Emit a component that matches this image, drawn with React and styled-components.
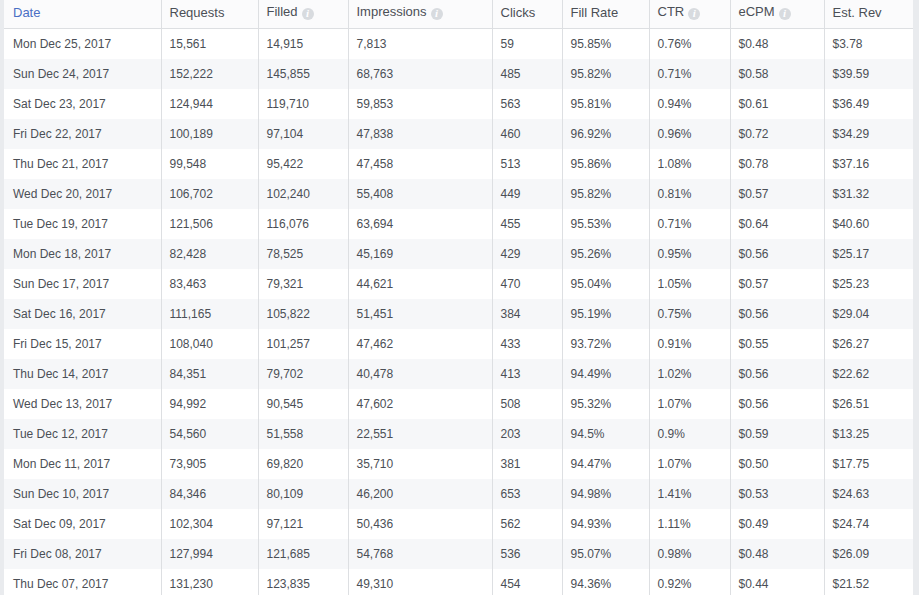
import React from 'react';
import styled, { createGlobalStyle } from 'styled-components';

const GlobalStyle = createGlobalStyle`
  html, body {
    margin: 0;
    padding: 0;
    background: #e9ebee;
    font-family: "Liberation Sans", Arial, sans-serif;
  }
`;

const Page = styled.div`
  padding: 0 6px 0 4px;
  background: #e9ebee;
  height: 595px;
  overflow: hidden;
`;

const Table = styled.table`
  width: 909px;
  border-collapse: collapse;
  table-layout: fixed;
  background: #fff;
  font-size: 12px;
  color: #4b4f56;
`;

const HeadCell = styled.th`
  height: 24px;
  padding: 0 8px 4px;
  text-align: left;
  font-weight: normal;
  font-size: 13px;
  color: ${(p) => (p.$active ? '#4a6fc4' : '#4b4f56')};
  background: #fbfbfc;
  border-left: 1px solid #dddfe2;
  border-bottom: 1px solid #dddfe2;
  white-space: nowrap;
  vertical-align: middle;

  &:first-child {
    border-left: none;
    padding-left: 9px;
  }
`;

const Row = styled.tr`
  background: ${(p) => (p.$striped ? '#f6f7f9' : '#fff')};
`;

const Cell = styled.td`
  height: 30px;
  padding: 0 8px;
  border-left: 1px solid #dddfe2;
  white-space: nowrap;
  vertical-align: middle;

  &:first-child {
    border-left: none;
    padding-left: 9px;
  }
`;

const Info = styled.span`
  display: inline-flex;
  align-items: center;
  justify-content: center;
  width: 12px;
  height: 12px;
  margin-left: 4px;
  border-radius: 50%;
  background: #d8dbdf;
  color: #fff;
  font-family: "Liberation Serif", "Times New Roman", serif;
  font-style: italic;
  font-weight: bold;
  font-size: 11px;
  line-height: 1;
  vertical-align: -1px;
`;

const columns = [
  { label: 'Date', width: 157, active: true },
  { label: 'Requests', width: 97 },
  { label: 'Filled', width: 90, info: true },
  { label: 'Impressions', width: 144, info: true },
  { label: 'Clicks', width: 70 },
  { label: 'Fill Rate', width: 87 },
  { label: 'CTR', width: 81, info: true },
  { label: 'eCPM', width: 94, info: true },
  { label: 'Est. Rev', width: 89 },
];

const rows = [
  ['Mon Dec 25, 2017', '15,561', '14,915', '7,813', '59', '95.85%', '0.76%', '$0.48', '$3.78'],
  ['Sun Dec 24, 2017', '152,222', '145,855', '68,763', '485', '95.82%', '0.71%', '$0.58', '$39.59'],
  ['Sat Dec 23, 2017', '124,944', '119,710', '59,853', '563', '95.81%', '0.94%', '$0.61', '$36.49'],
  ['Fri Dec 22, 2017', '100,189', '97,104', '47,838', '460', '96.92%', '0.96%', '$0.72', '$34.29'],
  ['Thu Dec 21, 2017', '99,548', '95,422', '47,458', '513', '95.86%', '1.08%', '$0.78', '$37.16'],
  ['Wed Dec 20, 2017', '106,702', '102,240', '55,408', '449', '95.82%', '0.81%', '$0.57', '$31.32'],
  ['Tue Dec 19, 2017', '121,506', '116,076', '63,694', '455', '95.53%', '0.71%', '$0.64', '$40.60'],
  ['Mon Dec 18, 2017', '82,428', '78,525', '45,169', '429', '95.26%', '0.95%', '$0.56', '$25.17'],
  ['Sun Dec 17, 2017', '83,463', '79,321', '44,621', '470', '95.04%', '1.05%', '$0.57', '$25.23'],
  ['Sat Dec 16, 2017', '111,165', '105,822', '51,451', '384', '95.19%', '0.75%', '$0.56', '$29.04'],
  ['Fri Dec 15, 2017', '108,040', '101,257', '47,462', '433', '93.72%', '0.91%', '$0.55', '$26.27'],
  ['Thu Dec 14, 2017', '84,351', '79,702', '40,478', '413', '94.49%', '1.02%', '$0.56', '$22.62'],
  ['Wed Dec 13, 2017', '94,992', '90,545', '47,602', '508', '95.32%', '1.07%', '$0.56', '$26.51'],
  ['Tue Dec 12, 2017', '54,560', '51,558', '22,551', '203', '94.5%', '0.9%', '$0.59', '$13.25'],
  ['Mon Dec 11, 2017', '73,905', '69,820', '35,710', '381', '94.47%', '1.07%', '$0.50', '$17.75'],
  ['Sun Dec 10, 2017', '84,346', '80,109', '46,200', '653', '94.98%', '1.41%', '$0.53', '$24.63'],
  ['Sat Dec 09, 2017', '102,304', '97,121', '50,436', '562', '94.93%', '1.11%', '$0.49', '$24.74'],
  ['Fri Dec 08, 2017', '127,994', '121,685', '54,768', '536', '95.07%', '0.98%', '$0.48', '$26.09'],
  ['Thu Dec 07, 2017', '131,230', '123,835', '49,310', '454', '94.36%', '0.92%', '$0.44', '$21.52'],
];

export default function App() {
  return (
    <Page>
      <GlobalStyle />
      <Table>
        <colgroup>
          {columns.map((c) => (
            <col key={c.label} style={{ width: c.width }} />
          ))}
        </colgroup>
        <thead>
          <tr>
            {columns.map((c) => (
              <HeadCell key={c.label} $active={c.active}>
                {c.label}
                {c.info && <Info>i</Info>}
              </HeadCell>
            ))}
          </tr>
        </thead>
        <tbody>
          {rows.map((r, i) => (
            <Row key={r[0]} $striped={i % 2 === 1}>
              {r.map((v, j) => (
                <Cell key={columns[j].label}>{v}</Cell>
              ))}
            </Row>
          ))}
        </tbody>
      </Table>
    </Page>
  );
}
